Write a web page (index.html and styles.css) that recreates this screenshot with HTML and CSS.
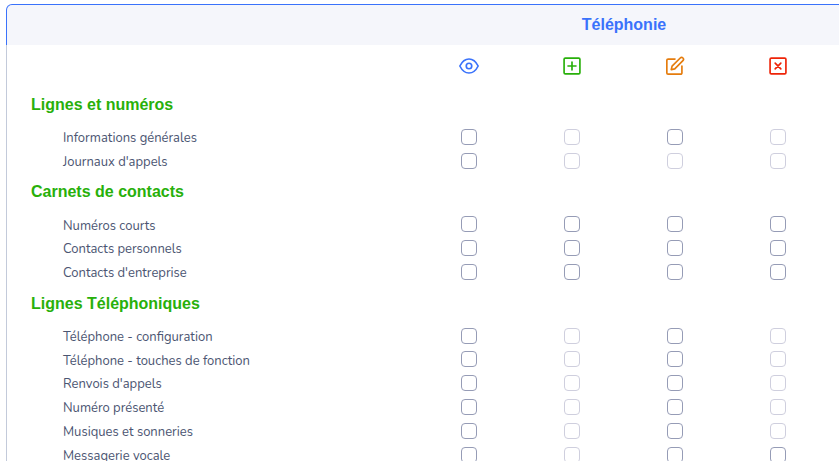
FILE: index.html
```html
<!DOCTYPE html>
<html lang="fr">
<head>
    <meta charset="UTF-8">
    <title>Droits - Téléphonie</title>
    <link rel="stylesheet" href="styles.css">
</head>
<body>
    <div class="panel">
        <div class="panel-header">Téléphonie</div>
        <div class="panel-body">
            <!-- Column icons: read, create, edit, delete -->
            <div class="row icons">
                <span></span>
                <svg class="icon view" viewBox="0 0 24 24"><path d="M1 12C3.8 6.4 7.6 3.6 12 3.6S20.2 6.4 23 12C20.2 17.6 16.4 20.4 12 20.4S3.8 17.6 1 12Z"/><circle cx="12" cy="12" r="3.3"/></svg>
                <svg class="icon add" viewBox="0 0 24 24"><rect x="2.5" y="2.5" width="19" height="19" rx="1.5"/><path d="M12 7.2v9.6M7.2 12h9.6"/></svg>
                <svg class="icon edit" viewBox="0 0 24 24"><path d="M12 3.7H3.7a1.5 1.5 0 0 0-1.5 1.5v15.1a1.5 1.5 0 0 0 1.5 1.5h15.1a1.5 1.5 0 0 0 1.5-1.5V12"/><path d="M8.5 12.2 18.3 2.4a2.2 2.2 0 0 1 3.2 3.2L11.7 15.4l-4.2 1z"/></svg>
                <svg class="icon delete" viewBox="0 0 24 24"><rect x="2.5" y="2.5" width="19" height="19" rx="1.5"/><path d="M8.6 8.6l6.8 6.8M15.4 8.6l-6.8 6.8"/></svg>
            </div>

            <h2>Lignes et numéros</h2>
            <div class="row"><label>Informations générales</label><input type="checkbox"><input type="checkbox" disabled><input type="checkbox"><input type="checkbox" disabled></div>
            <div class="row"><label>Journaux d'appels</label><input type="checkbox"><input type="checkbox" disabled><input type="checkbox" disabled><input type="checkbox" disabled></div>

            <h2>Carnets de contacts</h2>
            <div class="row"><label>Numéros courts</label><input type="checkbox"><input type="checkbox"><input type="checkbox"><input type="checkbox"></div>
            <div class="row"><label>Contacts personnels</label><input type="checkbox"><input type="checkbox"><input type="checkbox"><input type="checkbox"></div>
            <div class="row"><label>Contacts d'entreprise</label><input type="checkbox"><input type="checkbox"><input type="checkbox"><input type="checkbox"></div>

            <h2>Lignes Téléphoniques</h2>
            <div class="row"><label>Téléphone - configuration</label><input type="checkbox"><input type="checkbox" disabled><input type="checkbox"><input type="checkbox" disabled></div>
            <div class="row"><label>Téléphone - touches de fonction</label><input type="checkbox"><input type="checkbox" disabled><input type="checkbox"><input type="checkbox" disabled></div>
            <div class="row"><label>Renvois d'appels</label><input type="checkbox"><input type="checkbox" disabled><input type="checkbox"><input type="checkbox" disabled></div>
            <div class="row"><label>Numéro présenté</label><input type="checkbox"><input type="checkbox" disabled><input type="checkbox"><input type="checkbox" disabled></div>
            <div class="row"><label>Musiques et sonneries</label><input type="checkbox"><input type="checkbox" disabled><input type="checkbox"><input type="checkbox" disabled></div>
            <div class="row"><label>Messagerie vocale</label><input type="checkbox"><input type="checkbox" disabled><input type="checkbox"><input type="checkbox"></div>
        </div>
    </div>
</body>
</html>
```

FILE: styles.css
```css
body {
    margin: 0;
    height: 100vh;
    overflow: hidden;
    background-color: #ffffff;
    font-family: Nunito, "Noto Sans", sans-serif;
}

/* Panel */
.panel {
    width: 1236px;
    margin: 4px 0 0 6px;
}

.panel-header {
    height: 41px;
    box-sizing: border-box;
    border: 1px solid #3a72fb;
    border-bottom: none;
    border-radius: 6px 6px 0 0;
    background-color: #f5f6fb;
    color: #3a72fb;
    font: bold 16px/39px "Liberation Sans", Arial, sans-serif;
    text-align: center;
}

.panel-body {
    border-left: 1px solid #c3cada;
    padding-bottom: 30px;
}

h2 {
    height: 39.9px;
    margin: 0;
    padding-left: 24px;
    color: #28b00a;
    font: bold 16px/40.6px "Liberation Sans", Arial, sans-serif;
}

/* Permission rows */
.row {
    display: grid;
    grid-template-columns: 410.5px repeat(4, 103px);
    height: 23.8px;
    align-items: center;
    justify-items: center;
}

.row label {
    justify-self: start;
    padding: 2.6px 0 0 56px;
    color: #4b5572;
    font-size: 13px;
    line-height: 18px;
}

.row input {
    appearance: none;
    box-sizing: border-box;
    width: 16px;
    height: 16px;
    margin: 0;
    border: 1px solid #969cb6;
    border-radius: 4px;
    background-color: #ffffff;
}

.row input:disabled {
    border-color: #cfcfde;
}

/* Icons */
.icons {
    height: 40px;
}

.icon {
    width: 20px;
    height: 20px;
    margin-top: 2px;
    fill: none;
    stroke-width: 2;
    stroke-linecap: round;
    stroke-linejoin: round;
}

.view { stroke: #3a72fb; }
.add { stroke: #28b00a; }
.edit { stroke: #e57c0d; }
.delete { stroke: #ee2408; }
```
